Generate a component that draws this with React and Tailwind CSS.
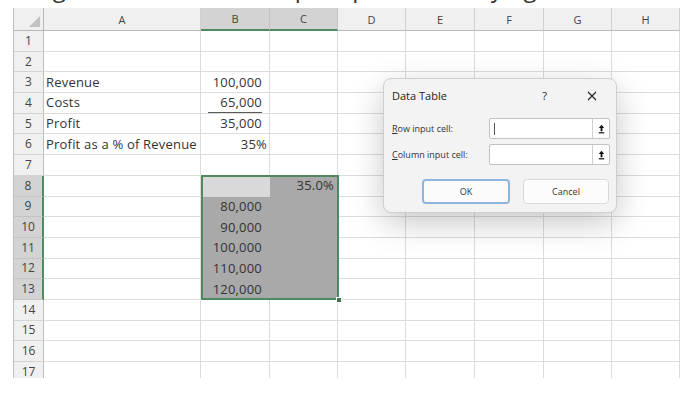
import React from "react";

const COLS = ["A", "B", "C", "D", "E", "F", "G", "H"];

const DATA = {
  3: { A: "Revenue", B: "100,000" },
  4: { A: "Costs", B: "65,000" },
  5: { A: "Profit", B: "35,000" },
  6: { A: "Profit as a % of Revenue", B: "35%" },
  8: { C: "35.0%" },
  9: { B: "80,000" },
  10: { B: "90,000" },
  11: { B: "100,000" },
  12: { B: "110,000" },
  13: { B: "120,000" },
};

function isSel(r, c) {
  return r >= 8 && r <= 13 && (c === "B" || c === "C");
}

function Cell({ r, c }) {
  const v = DATA[r] && DATA[r][c];
  const sel = isSel(r, c);
  const active = r === 8 && c === "B";
  let cls =
    "flex items-center border-r border-b text-[13px] leading-none text-[#333] whitespace-nowrap overflow-visible ";
  if (active) cls += "bg-[#d9d9d9] border-[#d9d9d9] ";
  else if (sel) cls += "bg-[#a9a9a9] border-[#a9a9a9] ";
  else cls += "bg-white border-[#dcdcdc] ";
  if (c === "A") cls += "justify-start pl-[2px] tracking-[0.2px] ";
  else cls += "justify-end tracking-[0.2px] ";
  if (c === "B" && r === 6) cls += "pr-[2px] ";
  else if (c === "B" && r !== 4) cls += "pr-[7px] ";
  else if (c === "C") cls += "pr-[3px] ";

  if (r === 4 && c === "B") {
    return (
      <div className={cls + "pr-[7px]"}>
        <div className="h-full w-[54px] flex items-center justify-end border-b border-[#5a5a5a]">
          {v}
        </div>
      </div>
    );
  }
  return <div className={cls}>{v}</div>;
}

function RowHead({ r }) {
  const sel = r >= 8 && r <= 13;
  return (
    <div
      className={
        "flex items-center justify-center border-b text-[12px] leading-none text-[#444] " +
        (sel
          ? "bg-[#d3d3d3] border-b-[#c4c4c4] border-r-2 border-r-[#4e8a5e]"
          : "bg-[#f0f0f0] border-b-[#d4d4d4] border-r border-r-[#bdbdbd]")
      }
    >
      {r}
    </div>
  );
}

function ColHead({ c }) {
  const sel = c === "B" || c === "C";
  return (
    <div
      className={
        "flex items-center justify-center border-r text-[11px] leading-none text-[#444] " +
        (sel
          ? "bg-[#d3d3d3] border-r-[#c4c4c4] border-b-2 border-b-[#4e8a5e]"
          : "bg-[#f0f0f0] border-r-[#d0d0d0] border-b border-b-[#b8b8b8]")
      }
    >
      {c}
    </div>
  );
}

function CollapseIcon() {
  return (
    <svg width="7" height="10" viewBox="0 0 7 10">
      <path d="M3.5 0.8 L6.2 4 L4.4 4 L4.4 7.2 L2.6 7.2 L2.6 4 L0.8 4 Z" fill="#111" />
      <rect x="0.8" y="8.2" width="5.4" height="1.2" fill="#111" />
    </svg>
  );
}

function RefInput({ cursor }) {
  return (
    <div className="w-[121px] h-[21px] flex bg-white border border-[#c2c2c2] rounded-[2px]">
      <div className="flex-1 flex items-center pl-[4px]">
        {cursor && <div className="w-px h-[12px] bg-[#555]" />}
      </div>
      <div className="w-[17px] flex items-center justify-center border-l border-[#d0d0d0]">
        <CollapseIcon />
      </div>
    </div>
  );
}

function Dialog() {
  return (
    <div className="absolute left-[383px] top-[78px] w-[234px] h-[135px] rounded-[8px] bg-[#f3f3f3] border border-[#cfcfcf] shadow-[0_10px_32px_rgba(0,0,0,0.22)] flex flex-col font-['Open_Sans'] text-[#222]">
      <div className="flex items-center h-[15px] mt-[9px] pl-[8px]">
        <span className="text-[11px] leading-none">Data Table</span>
        <span className="ml-auto text-[11px] leading-none mr-[40px]">?</span>
        <svg width="10" height="10" viewBox="0 0 10 10" className="mr-[19px]">
          <path d="M1 1 L9 9 M9 1 L1 9" stroke="#222" strokeWidth="1.1" />
        </svg>
      </div>
      <div className="flex flex-col gap-[5px] mt-[15px] pl-[8px] pr-[6px]">
        <div className="flex items-center">
          <span className="flex-1 text-[9px] text-[#333] leading-none">
            <span className="underline">R</span>ow input cell:
          </span>
          <RefInput cursor />
        </div>
        <div className="flex items-center">
          <span className="flex-1 text-[9px] text-[#333] leading-none">
            <span className="underline">C</span>olumn input cell:
          </span>
          <RefInput />
        </div>
      </div>
      <div className="flex justify-end gap-[13px] mt-[14px] pr-[7px]">
        <div className="w-[88px] h-[25px] flex items-center justify-center rounded-[4px] bg-[#fbfbfb] border-2 border-[#8fb4de] text-[9px] text-[#333]">
          OK
        </div>
        <div className="w-[86px] h-[25px] flex items-center justify-center rounded-[4px] bg-[#fcfcfc] border border-[#d9d9d9] text-[9px] text-[#333]">
          Cancel
        </div>
      </div>
    </div>
  );
}

export default function App() {
  const rows = Array.from({ length: 17 }, (_, i) => i + 1);
  return (
    <div className="relative w-[687px] h-[397px] bg-white overflow-hidden font-['Open_Sans']">
      <div className="h-[8px] overflow-hidden">
        <div className="mt-[-24px] ml-[3px] text-[24px] leading-[24px] text-[#333] whitespace-nowrap">
          Using a Data Table to compare profit on varying revenue
        </div>
      </div>
      <div className="relative ml-[13px] w-[667px] h-[370px] overflow-hidden border-l border-[#bdbdbd]">
        <div className="grid grid-cols-[30px_157px_69px_68px_68px_69px_69px_68px_68px] grid-rows-[23px_repeat(17,20.7px)]">
          <div className="bg-[#f0f0f0] border-r border-b border-[#b8b8b8] flex items-end justify-end pr-[3px] pb-[3px]">
            <svg width="11" height="11" viewBox="0 0 11 11">
              <path d="M11 0 L11 11 L0 11 Z" fill="#c2c2c2" />
            </svg>
          </div>
          {COLS.map((c) => (
            <ColHead key={c} c={c} />
          ))}
          {rows.map((r) => (
            <React.Fragment key={r}>
              <RowHead r={r} />
              {COLS.map((c) => (
                <Cell key={c} r={r} c={c} />
              ))}
            </React.Fragment>
          ))}
        </div>
        <div className="absolute left-[187px] top-[167px] w-[138px] h-[125px] border-2 border-[#4e8a5e] pointer-events-none" />
        <div className="absolute left-[322px] top-[289px] w-[6px] h-[6px] bg-[#3f7650] border border-white" />
      </div>
      <Dialog />
    </div>
  );
}
